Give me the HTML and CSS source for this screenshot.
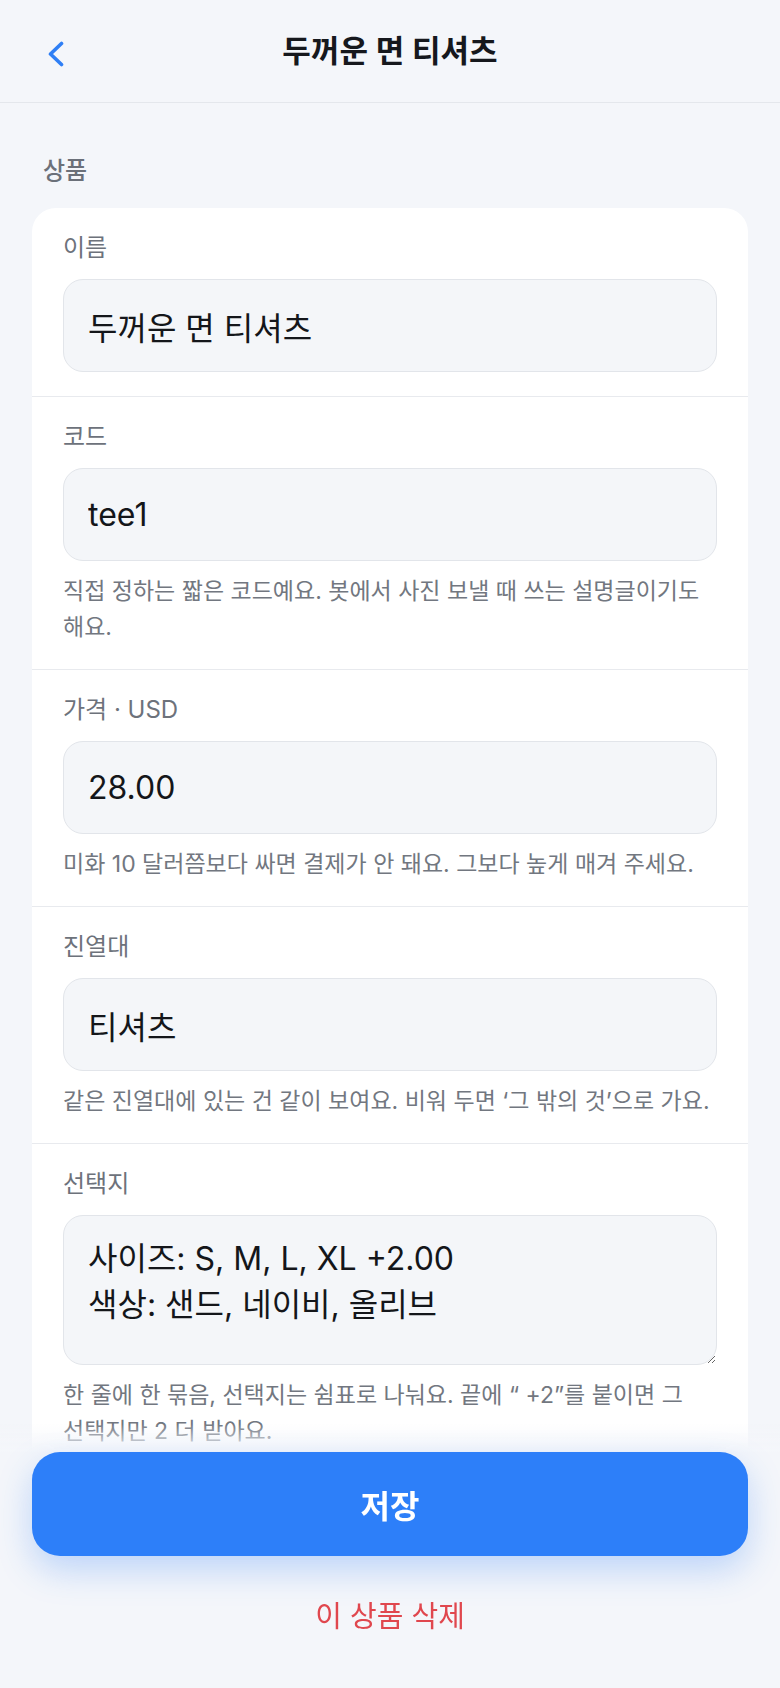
FILE: index.html
```html
<!DOCTYPE html>
<html lang="ko">
<head>
<meta charset="utf-8">
<meta name="viewport" content="width=device-width, initial-scale=1">
<title>두꺼운 면 티셔츠</title>
<link rel="stylesheet" href="styles.css">
</head>
<body>
<header class="topbar">
  <button class="back" type="button" aria-label="뒤로">
    <svg width="18" height="26" viewBox="0 0 18 26" aria-hidden="true">
      <polyline points="14.5,2.5 3.5,13 14.5,23.5" fill="none" stroke="#2f7ff5" stroke-width="3.6" stroke-linejoin="round" stroke-linecap="round"/>
    </svg>
  </button>
  <h1 class="title">두꺼운 면 티셔츠</h1>
  <span class="spacer"></span>
</header>

<main class="content">
  <h2 class="section-label">상품</h2>
  <form class="card">
    <div class="field">
      <label class="label" for="name">이름</label>
      <input class="input" id="name" type="text" value="두꺼운 면 티셔츠">
    </div>
    <div class="field">
      <label class="label" for="code">코드</label>
      <input class="input" id="code" type="text" value="tee1">
      <p class="help">직접 정하는 짧은 코드예요. 봇에서 사진 보낼 때 쓰는 설명글이기도 해요.</p>
    </div>
    <div class="field">
      <label class="label" for="price">가격 · USD</label>
      <input class="input" id="price" type="text" value="28.00">
      <p class="help">미화 10 달러쯤보다 싸면 결제가 안 돼요. 그보다 높게 매겨 주세요.</p>
    </div>
    <div class="field">
      <label class="label" for="shelf">진열대</label>
      <input class="input" id="shelf" type="text" value="티셔츠">
      <p class="help">같은 진열대에 있는 건 같이 보여요. 비워 두면 ‘그 밖의 것’으로 가요.</p>
    </div>
    <div class="field">
      <label class="label" for="opts">선택지</label>
      <textarea class="input textarea" id="opts">사이즈: S, M, L, XL +2.00
색상: 샌드, 네이비, 올리브</textarea>
      <p class="help">한 줄에 한 묶음, 선택지는 쉼표로 나눠요. 끝에 “ +2”를 붙이면 그 선택지만 2 더 받아요.</p>
    </div>
  </form>
</main>

<div class="bottombar">
  <button class="save" type="button">저장</button>
  <button class="delete" type="button">이 상품 삭제</button>
</div>
</body>
</html>
```

FILE: styles.css
```css
* { box-sizing: border-box; }

html, body {
  margin: 0;
  padding: 0;
  background: #f4f6fa;
}

body {
  font-family: Inter, "Noto Sans CJK KR", sans-serif;
  color: #15171c;
  width: 780px;
  word-break: keep-all;
}

.topbar {
  height: 103px;
  border-bottom: 1px solid #e4e7ec;
  display: grid;
  grid-template-columns: 1fr auto 1fr;
  align-items: center;
}

.back {
  justify-self: start;
  margin-left: 47px;
  margin-top: 6px;
  padding: 0;
  border: none;
  background: none;
  display: flex;
}

.title {
  margin: 0;
  font-size: 31px;
  font-weight: 600;
  line-height: 38px;
  color: #16181d;
}

.content {
  padding: 0 32px 200px;
}

.section-label {
  margin: 0;
  padding: 53px 0 22px 11px;
  font-size: 24px;
  line-height: 30px;
  font-weight: 500;
  color: #6b7079;
}

.card {
  background: #ffffff;
  border-radius: 24px;
  margin: 0;
}

.field {
  padding: 25px 31px 24px;
  border-bottom: 1px solid #e8eaee;
  display: flex;
  flex-direction: column;
}

.field:last-child { border-bottom: none; }

.label {
  font-size: 24px;
  line-height: 30px;
  color: #6d727b;
  margin-bottom: 16px;
}

.input {
  display: block;
  width: 100%;
  height: 93px;
  padding: 0 24px;
  border: 1.5px solid #e2e5ea;
  border-radius: 20px;
  background: #f4f6f9;
  font-family: Inter, "Noto Sans CJK KR", sans-serif;
  font-size: 32px;
  color: #14161a;
  outline: none;
}

.textarea {
  height: 150px;
  padding: 20px 24px;
  line-height: 46px;
  resize: vertical;
  word-break: keep-all;
}

.help {
  margin: 12px 0 0;
  font-size: 23px;
  line-height: 36px;
  color: #727780;
}

.bottombar {
  position: fixed;
  left: 0;
  right: 0;
  bottom: 0;
  padding: 28px 32px 51px;
  background: linear-gradient(to bottom, rgba(244, 246, 250, 0) 0, #f4f6fa 28px);
  display: flex;
  flex-direction: column;
}

.save {
  height: 104px;
  border: none;
  border-radius: 28px;
  background: #2d7ff9;
  color: #ffffff;
  font-family: Inter, "Noto Sans CJK KR", sans-serif;
  font-size: 32px;
  font-weight: 600;
  box-shadow: 0 14px 34px rgba(45, 127, 249, 0.28);
}

.delete {
  margin-top: 41px;
  height: 40px;
  border: none;
  background: none;
  color: #e0474e;
  font-family: Inter, "Noto Sans CJK KR", sans-serif;
  font-size: 29px;
  font-weight: 400;
  line-height: 40px;
  padding: 0;
}
```
